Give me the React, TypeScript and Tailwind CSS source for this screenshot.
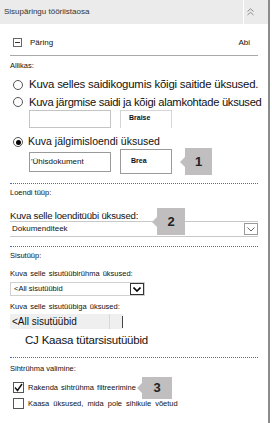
import React from 'react';

const Radio = ({ checked = false }: { checked?: boolean }) => (
  <span className="w-[10px] h-[10px] rounded-full border border-[#555] bg-white flex items-center justify-center shrink-0">
    {checked && <span className="w-[5px] h-[5px] rounded-full bg-black" />}
  </span>
);

const Check = ({ checked = false }: { checked?: boolean }) => (
  <span className="w-[11px] h-[11px] border border-[#555] bg-white flex items-center justify-center shrink-0">
    {checked && (
      <svg width="9" height="9" viewBox="0 0 9 9">
        <path d="M1 4.5 L3.5 7.5 L8 1" fill="none" stroke="#111" strokeWidth="1.4" />
      </svg>
    )}
  </span>
);

const Callout = ({ n, className }: { n: string; className: string }) => (
  <div className={`absolute flex items-center ${className}`}>
    <span className="w-0 h-0 border-y-[5px] border-y-transparent border-r-[5px] border-r-[#c0bebe]" />
    <div className="flex-1 h-full bg-[#c0bebe] flex items-center justify-center text-[13px] font-bold text-[#222]">
      {n}
    </div>
  </div>
);

const DropArrow = ({ dark = false }: { dark?: boolean }) => (
  <span
    className={`w-[14px] h-[12px] flex items-center justify-center border ${
      dark ? 'border-[#333]' : 'border-[#999]'
    }`}
  >
    <svg width="8" height="5" viewBox="0 0 8 5">
      <path d="M0.5 0.5 L4 4 L7.5 0.5" fill="none" stroke={dark ? '#000' : '#666'} strokeWidth={dark ? 1.6 : 1} />
    </svg>
  </span>
);

const Dotted = () => <div className="border-t border-dotted border-[#3d6fc6]" />;

export default function App() {
  return (
    <div className="w-[272px] h-[423px] bg-white font-['Liberation_Sans',Arial,sans-serif] text-[#111] overflow-hidden">
      <div className="relative w-[270px] h-[423px] border-r-2 border-[#8c8c8c]">
        {/* header */}
        <div className="h-[24px] bg-[#ebebeb] flex">
          <div className="flex-1 flex items-center pl-[4px] text-[8px] text-[#333]">Sisupäringu tööriistaosa</div>
          <div className="w-px bg-white" />
          <div className="w-[24px] flex items-center pl-[3px]">
            <svg width="7" height="8" viewBox="0 0 7 8">
              <path d="M0.5 3.5 L3.5 0.8 L6.5 3.5 M0.5 7 L3.5 4.3 L6.5 7" fill="none" stroke="#8a8a8a" strokeWidth="1" />
            </svg>
          </div>
        </div>

        <div className="px-[10px]">
          {/* query row */}
          <div className="h-[32px] pt-[6px] border-b border-[#a8a8a8] flex items-center text-[8px]">
            <span className="ml-[3px] w-[9px] h-[9px] border border-[#666] flex items-center justify-center">
              <span className="w-[5px] h-px bg-[#333]" />
            </span>
            <span className="ml-[8px]">Päring</span>
            <span className="ml-auto mr-[8px]">Abi</span>
          </div>

          <div className="h-[20px] flex items-center text-[7.5px]">Allikas:</div>

          <div className="h-[18px] flex items-center gap-[6px] pl-[3px] text-[11.4px] tracking-[-0.2px] whitespace-nowrap">
            <Radio />
            <span>Kuva selles saidikogumis kõigi saitide üksused.</span>
          </div>
          <div className="h-[16px] flex items-center gap-[6px] pl-[3px] text-[11.2px] tracking-[-0.3px] whitespace-nowrap">
            <Radio />
            <span>Kuva järgmise saidi ja kõigi alamkohtade üksused</span>
          </div>
          <div className="h-[18px] flex items-stretch pl-[19px]">
            <div className="w-[82px] border border-[#c4c4c4]" />
            <div className="ml-[9px] w-[52px] border-x border-t border-[#d6d6d6] text-[7px] font-bold pl-[8px] pt-[2px]">Braise</div>
          </div>

          <div className="mt-[8px] h-[12px] flex items-center gap-[5px] pl-[3px] text-[10.5px] whitespace-nowrap">
            <Radio checked />
            <span>Kuva jälgimisloendi üksused</span>
          </div>
          <div className="relative h-[27px] flex items-center pl-[19px]">
            <div className="w-[82px] h-[20px] border border-[#9a9a9a] flex items-center pl-[1px] text-[8px]">
              'Ühisdokument
            </div>
            <div className="ml-[9px] w-[52px] h-[25px] border border-[#9a9a9a] flex items-center pl-[10px] text-[7px] font-bold">
              Brea
            </div>
            <Callout n="1" className="left-[170px] top-0 w-[32px] h-[27px]" />
          </div>

          <div className="mt-[8px]">
            <Dotted />
          </div>
          <div className="h-[18px] flex items-center text-[7.5px]">Loendi tüüp:</div>

          <div className="relative">
            <div className="h-[13px] mt-[6px] flex items-end text-[9.6px] leading-none tracking-[-0.2px]">
              Kuva selle loenditüübi üksused:
            </div>
            <div className="h-[16px] border-y border-[#c8c8c8] flex items-center text-[8px] pl-[2px]">
              Dokumenditeek
              <span className="ml-auto">
                <DropArrow />
              </span>
            </div>
            <Callout n="2" className="left-[142px] top-[0px] w-[33px] h-[27px]" />
          </div>

          <div className="mt-[9px]">
            <Dotted />
          </div>
          <div className="h-[18px] flex items-center text-[7.5px]">Sisutüüp:</div>

          <div className="h-[17px] flex items-center text-[7.5px] [word-spacing:1px]">Kuva selle sisutüübirühma üksused:</div>
          <div className="w-[135px] h-[14px] border border-[#d0d0d0] flex items-center pl-[3px] text-[7.5px]">
            &lt;All sisutüübid
            <span className="ml-auto">
              <DropArrow dark />
            </span>
          </div>
          <div className="mt-[4px] h-[14px] flex items-center text-[7.5px] [word-spacing:1px]">Kuva selle sisutüübiga üksused:</div>
          <div className="relative w-[113px] h-[15px] bg-[#efefef] flex items-center pl-[2px] text-[10px]">
            &lt;All sisutüübid
            <span className="absolute left-[99px] top-0 h-full w-px bg-[#d8d8d8]" />
            <span className="absolute right-0 top-[2px] bottom-[1px] w-px bg-[#444]" />
          </div>
          <div className="h-[24px] flex items-center pl-[15px] text-[11.5px] tracking-[-0.2px]">CJ Kaasa tütarsisutüübid</div>

          <div className="mt-[4px]">
            <Dotted />
          </div>
          <div className="h-[22px] flex items-center text-[7.5px]">Sihtrühma valimine:</div>

          <div className="relative">
            <div className="h-[15px] flex items-center gap-[4px] pl-[3px] text-[7.5px] [word-spacing:1px]">
              <Check checked />
              <span>Rakenda sihtrühma filtreerimine</span>
            </div>
            <div className="h-[17px] flex items-center gap-[4px] pl-[3px] text-[7.5px] [word-spacing:2px]">
              <Check />
              <span>Kaasa üksused, mida pole sihikule võetud</span>
            </div>
            <Callout n="3" className="left-[127px] top-[-3px] w-[35px] h-[22px]" />
          </div>
        </div>
      </div>
    </div>
  );
}
